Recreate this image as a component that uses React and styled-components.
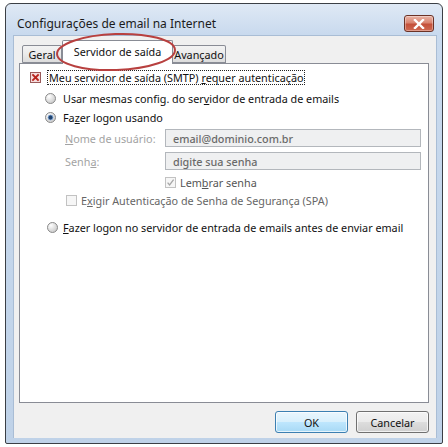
import React from 'react';
import styled, { createGlobalStyle } from 'styled-components';

const GlobalStyle = createGlobalStyle`
  html, body {
    margin: 0;
    padding: 0;
    background: #ffffff;
  }
  body {
    font-family: "Noto Sans", "DejaVu Sans", sans-serif;
  }
`;

const Window = styled.div`
  position: relative;
  margin: 3px 0 0 5px;
  width: 438px;
  height: 441px;
  box-sizing: border-box;
  border: 1px solid #3b3f45;
  border-radius: 6px 6px 2px 2px;
  background: linear-gradient(180deg, #dfe9f5 0px, #c9daee 30px, #bfd2e8 100%);
  display: flex;
  flex-direction: column;
`;

const TitleBar = styled.div`
  height: 31px;
  display: flex;
  align-items: flex-end;
  padding: 0 7px 3px 11px;
  box-sizing: border-box;
`;

const Title = styled.div`
  font-size: 12px;
  color: #1b1b1b;
  line-height: 16px;
`;

const CloseButton = styled.div`
  position: absolute;
  top: 11px;
  right: 8px;
  width: 30px;
  height: 17px;
  box-sizing: border-box;
  border: 1px solid #6b3226;
  border-radius: 3px;
  background: linear-gradient(180deg, #eab4a6 0%, #d98470 45%, #c4503a 55%, #cf6a52 100%);
  display: flex;
  align-items: center;
  justify-content: center;
  box-shadow: inset 0 0 0 1px rgba(255, 255, 255, 0.35);
`;

const Content = styled.div`
  margin-left: 7px;
  width: 424px;
  height: 403px;
  box-sizing: border-box;
  background: #f0f0f0;
  border: 1px solid #a9bdd5;
  border-bottom: none;
  padding: 4px 7px 0 5px;
  display: flex;
  flex-direction: column;
`;

const TabRow = styled.div`
  position: relative;
  display: flex;
  align-items: flex-end;
  height: 23px;
  padding-left: 3px;
  z-index: 2;
`;

const Tab = styled.div`
  box-sizing: border-box;
  flex-shrink: 0;
  width: ${p => p.width}px;
  height: ${p => (p.active ? 24 : 18)}px;
  margin-bottom: ${p => (p.active ? -1 : 0)}px;
  border: 1px solid #898c95;
  border-bottom: ${p => (p.active ? 'none' : '1px solid #898c95')};
  border-left: ${p => (p.noLeft ? 'none' : '1px solid #898c95')};
  border-radius: 2px 2px 0 0;
  background: ${p => (p.active ? '#ffffff' : 'linear-gradient(180deg, #f3f3f3 0%, #ebebeb 50%, #dcdcdc 100%)')};
  font-size: 10.8px;
  color: #111;
  display: flex;
  align-items: ${p => (p.active ? 'flex-start' : 'center')};
  justify-content: center;
  padding-top: ${p => (p.active ? 3 : 0)}px;
`;

const Ellipse = styled.svg`
  position: absolute;
  left: 36px;
  top: -8px;
  width: 122px;
  height: 40px;
  overflow: visible;
  pointer-events: none;
`;

const Panel = styled.div`
  height: 340px;
  box-sizing: border-box;
  background: #ffffff;
  border: 1px solid #898c95;
  display: flex;
  flex-direction: column;
  font-size: 10.8px;
  color: #111;
`;

const Row = styled.div`
  display: flex;
  align-items: center;
  height: ${p => p.h ?? 18}px;
  margin-top: ${p => p.top}px;
  margin-left: ${p => p.indent}px;
  gap: ${p => p.gap ?? 6}px;
  color: ${p => p.color ?? '#111'};
  white-space: nowrap;
`;

const FocusText = styled.span`
  border: 1px dotted #222;
  padding: 0 1px;
  line-height: 13px;
`;

const FieldLabel = styled.span`
  flex: 0 0 100px;
  color: #a3a3a3;
`;

const Input = styled.div`
  flex: 0 0 256px;
  height: 18px;
  box-sizing: border-box;
  border: 1px solid #b3b7bc;
  background: #eff0f1;
  color: #6a6a6a;
  font-weight: 500;
  padding-left: 7px;
  display: flex;
  align-items: center;
`;

const Footer = styled.div`
  display: flex;
  justify-content: flex-end;
  gap: 8px;
  margin-top: 8px;
`;

const Button = styled.div`
  width: 73px;
  height: 22px;
  box-sizing: border-box;
  border: 1px solid ${p => (p.primary ? '#3c7fb1' : '#707070')};
  border-radius: 3px;
  background: ${p =>
    p.primary
      ? 'linear-gradient(180deg, #eaf6fd 0%, #d9f0fc 48%, #bee6fd 52%, #a7d9f5 100%)'
      : 'linear-gradient(180deg, #f2f2f2 0%, #ebebeb 48%, #dddddd 52%, #cfcfcf 100%)'};
  box-shadow: inset 0 0 0 1px rgba(255, 255, 255, 0.7);
  font-size: 10.8px;
  color: #111;
  display: flex;
  align-items: center;
  justify-content: center;
`;

const Radio = ({ checked }) => (
  <svg width="11" height="11" viewBox="0 0 11 11">
    <defs>
      <radialGradient id={checked ? 'rc' : 'ru'} cx="0.35" cy="0.3" r="0.8">
        <stop offset="0" stopColor="#ffffff" />
        <stop offset="1" stopColor="#c4c4c4" />
      </radialGradient>
    </defs>
    <circle cx="5.5" cy="5.5" r="5" fill={`url(#${checked ? 'rc' : 'ru'})`} stroke="#8a8a8a" strokeWidth="1" />
    {checked && <circle cx="5.5" cy="5.5" r="2.4" fill="#22436e" stroke="#6f9bd0" strokeWidth="0.8" />}
  </svg>
);

const Check = ({ mark, disabled }) => (
  <svg width="11" height="11" viewBox="0 0 11 11">
    <rect
      x="0.5"
      y="0.5"
      width="10"
      height="10"
      fill={mark === 'x' ? '#f6dcdc' : disabled ? '#f6f6f6' : '#ffffff'}
      stroke={mark === 'x' ? '#9a5a5a' : '#c2c2c2'}
    />
    {mark === 'x' && (
      <path d="M3 3 L8 8 M8 3 L3 8" stroke="#b8231c" strokeWidth="1.8" strokeLinecap="square" />
    )}
    {mark === 'v' && <path d="M2.6 5.6 L4.6 8 L8.6 2.6" stroke="#a7a7a7" strokeWidth="1.3" fill="none" />}
  </svg>
);

export default function App() {
  return (
    <>
      <GlobalStyle />
      <Window>
        <TitleBar>
          <Title>Configurações de email na Internet</Title>
        </TitleBar>
        <CloseButton>
          <svg width="12" height="10" viewBox="0 0 12 10">
            <path d="M2 1 L10 9 M10 1 L2 9" stroke="#ffffff" strokeWidth="2.4" strokeLinecap="square" />
          </svg>
        </CloseButton>
        <Content>
          <TabRow>
            <Tab width={40}>Geral</Tab>
            <Tab width={111} active>Servidor de saída</Tab>
            <Tab width={53} noLeft>Avançado</Tab>
            <Ellipse viewBox="0 0 122 40">
              <ellipse cx="61" cy="20" rx="59" ry="18" fill="none" stroke="#b8403f" strokeWidth="2" transform="rotate(-2 61 20)" />
            </Ellipse>
          </TabRow>
          <Panel>
            <Row top={6} h={15} indent={10} gap={6}>
              <Check mark="x" />
              <FocusText>Meu servidor de saída (SMTP) <u>r</u>equer autenticação</FocusText>
            </Row>
            <Row top={4} indent={25} gap={7}>
              <Radio />
              <span>Usar mesmas config. do ser<u>v</u>idor de entrada de emails</span>
            </Row>
            <Row top={1} indent={25} gap={7}>
              <Radio checked />
              <span>Fa<u>z</u>er logon usando</span>
            </Row>
            <Row top={3} indent={45} gap={0}>
              <FieldLabel><u>N</u>ome de usuário:</FieldLabel>
              <Input>email@dominio.com.br</Input>
            </Row>
            <Row top={5} indent={45} gap={0}>
              <FieldLabel>Senh<u>a</u>:</FieldLabel>
              <Input>digite sua senha</Input>
            </Row>
            <Row top={4} h={16} indent={145} gap={4} color="#555">
              <Check mark="v" disabled />
              <span>Lem<u>b</u>rar senha</span>
            </Row>
            <Row top={2} h={16} indent={46} gap={4} color="#666">
              <Check disabled />
              <span>E<u>x</u>igir Autenticação de Senha de Segurança (SPA)</span>
            </Row>
            <Row top={10} indent={27} gap={5}>
              <Radio />
              <span><u>F</u>azer logon no servidor de entrada de emails antes de enviar email</span>
            </Row>
          </Panel>
          <Footer>
            <Button primary>OK</Button>
            <Button>Cancelar</Button>
          </Footer>
        </Content>
      </Window>
    </>
  );
}
